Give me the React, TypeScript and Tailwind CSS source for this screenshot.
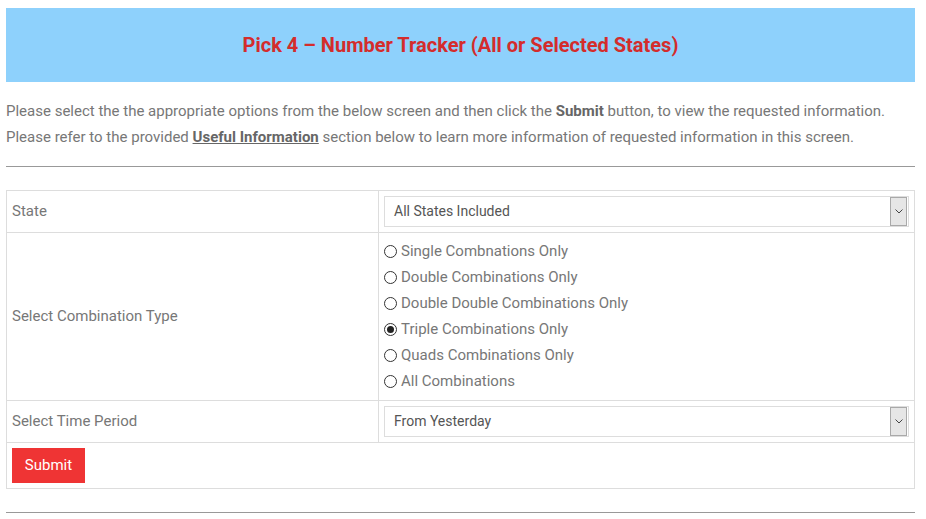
import { useState } from 'react';

const COMBOS = [
  'Single Combnations Only',
  'Double Combinations Only',
  'Double Double Combinations Only',
  'Triple Combinations Only',
  'Quads Combinations Only',
  'All Combinations',
];

function FakeSelect({ value }: { value: string }) {
  return (
    <div className="flex h-[31px] w-full items-center border border-[#dddddd] bg-white pl-[9px] pr-px">
      <span className="flex-1 text-[14px] text-[#555555]">{value}</span>
      <span className="flex h-[29px] w-[17px] items-center justify-center border border-[#a9a9a9] bg-[#e6e6e6]">
        <svg width="8" height="5" viewBox="0 0 8 5">
          <path d="M0.5 0.5 L4 4 L7.5 0.5" fill="none" stroke="#444" strokeWidth="1" />
        </svg>
      </span>
    </div>
  );
}

function Radio({ checked }: { checked: boolean }) {
  return (
    <span className="flex h-[13px] w-[13px] items-center justify-center rounded-full border border-[#333333] bg-white">
      {checked && <span className="h-[7px] w-[7px] rounded-full bg-[#222222]" />}
    </span>
  );
}

export default function App() {
  const [combo, setCombo] = useState(3);

  return (
    <div className="bg-white pl-[6px] pr-[11px] pt-[8px] font-['Roboto',sans-serif] text-[15px] text-[#777777]">
      <div className="flex h-[74px] items-center justify-center bg-[#8ed1fc]">
        <h1 className="text-[20px] font-bold text-[#d42c2c]">
          Pick 4 – Number Tracker (All or Selected States)
        </h1>
      </div>

      <div className="mt-[16px] text-[15px] leading-[26px]">
        <p>
          Please select the the appropriate options from the below screen and then click the{' '}
          <b className="text-[#666666]">Submit</b> button, to view the requested information.
        </p>
        <p>
          Please refer to the provided{' '}
          <b className="text-[#666666] underline">Useful Information</b> section below to learn more
          information of requested information in this screen.
        </p>
      </div>

      <hr className="mt-[16px] border-t border-[#999999]" />

      <table className="mt-[23px] w-full border-collapse border border-[#dddddd] text-[15px]">
        <tbody>
          <tr>
            <td className="w-[372px] border border-[#dddddd] px-[5px] py-[5px]">State</td>
            <td className="border border-[#dddddd] px-[5px] py-[5px]">
              <FakeSelect value="All States Included" />
            </td>
          </tr>
          <tr>
            <td className="border border-[#dddddd] px-[5px] py-[5px]">Select Combination Type</td>
            <td className="border border-[#dddddd] px-[5px] pb-[6px] pt-[5px]">
              {COMBOS.map((c, i) => (
                <div
                  key={c}
                  className="flex h-[26px] cursor-pointer items-center gap-[4px]"
                  onClick={() => setCombo(i)}
                >
                  <Radio checked={combo === i} />
                  <span>{c}</span>
                </div>
              ))}
            </td>
          </tr>
          <tr>
            <td className="border border-[#dddddd] px-[5px] py-[5px]">Select Time Period</td>
            <td className="border border-[#dddddd] px-[5px] py-[5px]">
              <FakeSelect value="From Yesterday" />
            </td>
          </tr>
          <tr>
            <td colSpan={2} className="border border-[#dddddd] px-[5px] py-[5px]">
              <button className="h-[35px] w-[73px] bg-[#ef3434] text-[15px] text-white">Submit</button>
            </td>
          </tr>
        </tbody>
      </table>

      <hr className="mt-[23px] border-t border-[#999999]" />
    </div>
  );
}
